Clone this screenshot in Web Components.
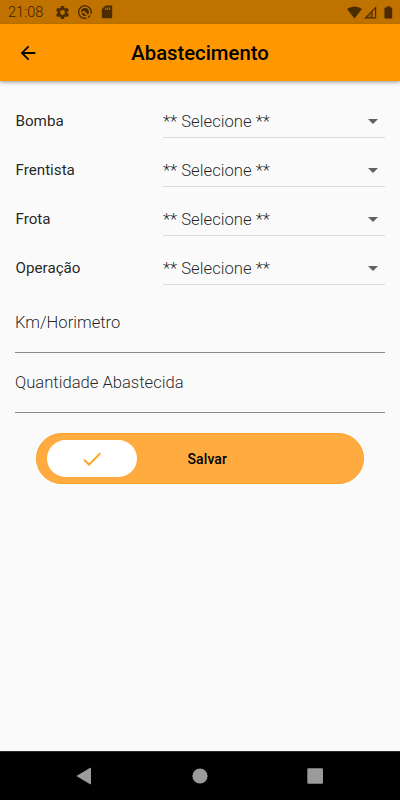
<!DOCTYPE html>
<html lang="pt-BR">
<head>
<meta charset="utf-8">
<title>Abastecimento</title>
<style>
  body {
    margin: 0;
    height: 800px;
    overflow: hidden;
    font-family: Roboto, "Liberation Sans", sans-serif;
    background: #fafafa;
  }
</style>
</head>
<body>

<template id="template-status-bar">
  <style>
    :host {
      display: flex;
      align-items: center;
      height: 24px;
      box-sizing: border-box;
      padding: 0 7px 0 8px;
      background: #bf7200;
      color: #4a2c00;
      font-size: 14px;
      flex: none;
    }
    svg { display: block; fill: currentColor; }
    .time { width: 47px; font-weight: 300; font-size: 14.5px; line-height: 24px; padding-top: 2px; color: #3a2200; }
    .left { display: flex; gap: 8px; flex: 1; }
    .right { display: flex; gap: 2px; }
  </style>
  <span class="time"><slot></slot></span>
  <div class="left">
    <svg width="15" height="15" viewBox="1 1 22 22"><path d="M19.14 12.94c.04-.3.06-.61.06-.94 0-.32-.02-.64-.07-.94l2.03-1.58c.18-.14.23-.41.12-.61l-1.92-3.32c-.12-.22-.37-.29-.59-.22l-2.39.96c-.5-.38-1.03-.7-1.62-.94l-.36-2.54c-.04-.24-.24-.41-.48-.41h-3.84c-.24 0-.43.17-.47.41l-.36 2.54c-.59.24-1.13.57-1.62.94l-2.39-.96c-.22-.08-.47 0-.59.22L2.74 8.87c-.12.21-.08.47.12.61l2.03 1.58c-.05.3-.09.63-.09.94s.02.64.07.94l-2.03 1.58c-.18.14-.23.41-.12.61l1.92 3.32c.12.22.37.29.59.22l2.39-.96c.5.38 1.03.7 1.62.94l.36 2.54c.05.24.24.41.48.41h3.84c.24 0 .44-.17.47-.41l.36-2.54c.59-.24 1.13-.56 1.62-.94l2.39.96c.22.08.47 0 .59-.22l1.92-3.32c.12-.22.07-.47-.12-.61l-2.01-1.58zM12 15.6a3.6 3.6 0 1 1 0-7.2 3.6 3.6 0 0 1 0 7.2z"/></svg>
    <svg width="14" height="14" viewBox="0 0 14 14">
      <path d="M8.6 13.1A6.3 6.3 0 1 1 12.9 9M10 12.5a6 6 0 0 0 2.2-2.2" fill="none" stroke="currentColor" stroke-width="1.3"/>
      <path d="M3 7.2A4 4 0 0 1 11 7c0 1.2-.4 2.1-1.2 2.8L7 6.6C6.2 5.8 4.6 6 4.2 7.2zM3.3 8.5l2.3-.6 3 2.9A4 4 0 0 1 3.3 8.5z"/>
    </svg>
    <svg style="margin-left: 1px" width="12" height="14" viewBox="0 0 12 14"><path d="M4.4.6H10c.7 0 1.2.5 1.2 1.2V12c0 .7-.5 1.2-1.2 1.2H2c-.7 0-1.2-.5-1.2-1.2V4.2zM4.2 2.6v2.3h1.1V2.6zm2 0v2.3h1.1V2.6zm2 0v2.3h1.1V2.6z" fill-rule="evenodd"/></svg>
  </div>
  <div class="right">
    <svg width="15" height="13" viewBox="0 0 15 13"><path d="M7.5 12.4L0 3.1A12 12 0 0 1 15 3.1z"/></svg>
    <svg width="13" height="13" viewBox="0 0 13 13"><path d="M11.6 1.6v10.2H1.5z" fill="none" stroke="currentColor" stroke-width="1.2"/><path d="M8.4 4.8V12H1.3z" opacity=".3"/><path d="M8 5v7" stroke="currentColor"/></svg>
    <svg style="margin-left: 5px" width="9" height="13" viewBox="0 0 9 13"><path d="M2.8.2h3.4v1.3h1.2c.5 0 .8.3.8.8v9.5c0 .5-.3.8-.8.8H1.2c-.5 0-.8-.3-.8-.8V2.3c0-.5.3-.8.8-.8h1.6z"/></svg>
  </div>
</template>

<template id="template-app-bar">
  <style>
    :host {
      display: grid;
      grid-template-columns: 57px 1fr 57px;
      align-items: center;
      height: 57px;
      background: #ff9800;
      color: #000;
      box-shadow: 0 2px 4px rgba(0, 0, 0, .22), 0 1px 2px rgba(0, 0, 0, .15);
      flex: none;
    }
    svg { display: block; margin-left: 17px; }
    h1 {
      margin: 0;
      text-align: center;
      font-size: 20.3px;
      font-weight: 500;
      line-height: 24px;
      padding-top: 1px;
    }
  </style>
  <svg width="22" height="22" viewBox="0 0 24 24"><path d="M20 11H7.83l5.59-5.59L12 4l-8 8 8 8 1.41-1.41L7.83 13H20v-2z"/></svg>
  <h1><slot></slot></h1>
</template>

<template id="template-select-row">
  <style>
    :host {
      display: flex;
      height: 49px;
      align-items: flex-end;
    }
    .label {
      width: 147.5px;
      padding-left: .5px;
      font-size: 15.2px;
      line-height: 33px;
      color: rgba(0, 0, 0, .87);
    }
    .field {
      flex: 1;
      display: flex;
      align-items: center;
      justify-content: space-between;
      height: 32px;
      border-bottom: 1px solid #dadada;
      font-size: 16.7px;
      font-weight: 300;
      color: rgba(0, 0, 0, .87);
      padding-right: 7.5px;
    }
    i {
      border: 5px solid transparent;
      border-top-color: #616161;
      border-bottom: 0;
    }
  </style>
  <span class="label"></span>
  <div class="field"><slot></slot><i></i></div>
</template>

<template id="template-text-line">
  <style>
    :host {
      display: block;
      height: 60px;
      box-sizing: border-box;
      padding-top: 20px;
      border-bottom: 1px solid #8a8a8a;
      font-size: 16.6px;
      font-weight: 300;
      line-height: 20px;
      color: rgba(0, 0, 0, .87);
    }
  </style>
  <slot></slot>
</template>

<template id="template-slide-button">
  <style>
    :host {
      display: grid;
      grid-template-columns: 90px 1fr 75px;
      align-items: center;
      height: 51px;
      box-sizing: border-box;
      margin: 20px 21px 0 20.5px;
      padding: 0 10px;
      border: 1px solid #ffa024;
      border-radius: 26px;
      background: #ffab40;
    }
    .thumb {
      display: flex;
      align-items: center;
      justify-content: center;
      height: 37px;
      border-radius: 19px;
      background: #fff;
    }
    .text {
      text-align: center;
      font-size: 14px;
      font-weight: 500;
      color: #000;
      letter-spacing: .1px;
    }
  </style>
  <div class="thumb">
    <svg width="24" height="24" viewBox="0 0 24 24" fill="#ffa726"><path d="M9 16.17L4.83 12l-1.42 1.41L9 19 21 7l-1.41-1.41z"/></svg>
  </div>
  <span class="text"><slot></slot></span>
</template>

<template id="template-nav-bar">
  <style>
    :host {
      display: flex;
      align-items: center;
      justify-content: space-between;
      height: 49px;
      box-sizing: border-box;
      padding: 0 76px;
      background: #000;
      border-top: 1px solid #2a2a2a;
      flex: none;
    }
    svg { display: block; fill: #9b9b9b; }
  </style>
  <svg width="16" height="18" viewBox="0 0 16 18"><path d="M.3 9L14.2.8q.8-.4.8.5v15.4q0 .9-.8.5z"/></svg>
  <svg width="16" height="16" viewBox="0 0 16 16"><circle cx="8" cy="8" r="7.6"/></svg>
  <svg width="17" height="16" viewBox="0 0 17 16"><rect x=".3" y=".2" width="15.7" height="15.6" rx="1.2"/></svg>
</template>

<template id="template-fuel-screen">
  <style>
    :host {
      display: flex;
      flex-direction: column;
      height: 800px;
    }
    main { flex: 1; padding: 8px 15px 0; }
  </style>
  <slot name="top"></slot>
  <main><slot></slot></main>
  <slot name="bottom"></slot>
</template>

<fuel-screen>
  <status-bar slot="top">21:08</status-bar>
  <app-bar slot="top">Abastecimento</app-bar>
  <select-row label="Bomba">** Selecione **</select-row>
  <select-row label="Frentista">** Selecione **</select-row>
  <select-row label="Frota">** Selecione **</select-row>
  <select-row label="Operação">** Selecione **</select-row>
  <text-line style="margin-top: 8px">Km/Horimetro</text-line>
  <text-line>Quantidade Abastecida</text-line>
  <slide-button>Salvar</slide-button>
  <nav-bar slot="bottom"></nav-bar>
</fuel-screen>

<script>
  // attaches the template with the matching id as the shadow root
  class TemplateElement extends HTMLElement {
    constructor() {
      super();
      const temp = document.querySelector('#template-' + this.localName);
      this._root = this.attachShadow({ mode: 'open' });
      this._root.appendChild(temp.content.cloneNode(true));
    }
  }

  class SelectRow extends TemplateElement {
    connectedCallback() {
      this._root.querySelector('.label').textContent = this.getAttribute('label');
    }
  }

  customElements.define('status-bar', class extends TemplateElement {});
  customElements.define('app-bar', class extends TemplateElement {});
  customElements.define('select-row', SelectRow);
  customElements.define('text-line', class extends TemplateElement {});
  customElements.define('slide-button', class extends TemplateElement {});
  customElements.define('nav-bar', class extends TemplateElement {});
  customElements.define('fuel-screen', class extends TemplateElement {});
</script>
</body>
</html>
